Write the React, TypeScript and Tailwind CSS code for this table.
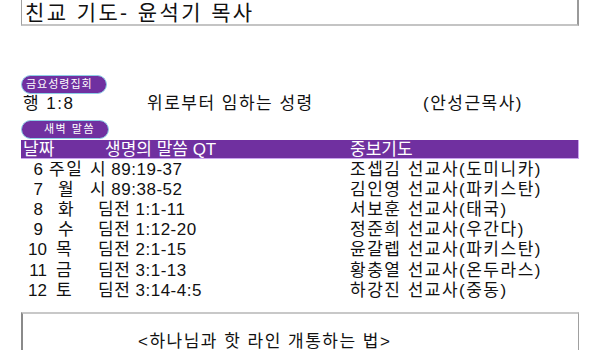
import React from "react";

const rows = [
  { num: "6", numCls: "pr-[4px]", day: "주일", dayCls: "pl-[2px]", verse: "시 89:19-37", vCls: "pl-0", pray: "조셉김 선교사(도미니카)" },
  { num: "7", numCls: "pr-[4px]", day: "월", dayCls: "pl-[11px]", verse: "시 89:38-52", vCls: "pl-0", pray: "김인영 선교사(파키스탄)" },
  { num: "8", numCls: "pr-[4px]", day: "화", dayCls: "pl-[11px]", verse: "딤전 1:1-11", vCls: "pl-[8px]", pray: "서보훈 선교사(태국)" },
  { num: "9", numCls: "pr-[4px]", day: "수", dayCls: "pl-[11px]", verse: "딤전 1:12-20", vCls: "pl-[8px]", pray: "정준희 선교사(우간다)" },
  { num: "10", numCls: "pr-0", day: "목", dayCls: "pl-[9px]", verse: "딤전 2:1-15", vCls: "pl-[8px]", pray: "윤갈렙 선교사(파키스탄)" },
  { num: "11", numCls: "pr-0", day: "금", dayCls: "pl-[9px]", verse: "딤전 3:1-13", vCls: "pl-[8px]", pray: "황충열 선교사(온두라스)" },
  { num: "12", numCls: "pr-0", day: "토", dayCls: "pl-[9px]", verse: "딤전 3:14-4:5", vCls: "pl-[8px]", pray: "하강진 선교사(중동)" },
];

export default function App() {
  return (
    <div
      className="w-[600px] h-[350px] overflow-hidden bg-white text-[#111]"
      style={{ fontFamily: '"Liberation Sans", "Noto Sans CJK KR", sans-serif' }}
    >
      <div className="ml-[21px] w-[558px] flex flex-col">
        {/* top box */}
        <div className="h-[26px] border-l border-r-2 border-b-2 border-l-[#a0a0a0] border-r-[#9a9a9a] border-b-[#c4c4c4] flex items-center pl-[3px]">
          <span className="text-[21px] leading-none tracking-[2.4px]">친교 기도- 윤석기 목사</span>
        </div>

        {/* pill 1 */}
        <div className="mt-[49px] w-[86px] h-[19px] rounded-full bg-[#7030a0] border border-[#8ecfe6] flex items-center pl-[4px]">
          <span className="text-[11px] leading-none text-white tracking-[1px]">금요성령집회</span>
        </div>

        {/* sermon line */}
        <div className="h-[26px] flex items-start pt-[1px] text-[17px] leading-none tracking-[1.5px]">
          <span className="w-[126px] pl-[2px]">행 1:8</span>
          <span className="w-[276px]">위로부터 임하는 성령</span>
          <span>(안성근목사)</span>
        </div>

        {/* pill 2 */}
        <div className="w-[88px] h-[19px] rounded-full bg-[#7030a0] border border-[#8ecfe6] flex items-center pl-[22px]">
          <span className="text-[11px] leading-none text-white tracking-[1.5px]">새벽 말씀</span>
        </div>

        {/* header bar */}
        <div className="mt-[1px] h-[19px] bg-[#7030a0] border-b border-r border-[#c9a3ee] flex items-center text-white text-[17px] leading-none">
          <span className="w-[84px] pl-[2px]">날짜</span>
          <span className="w-[245px]">생명의 말씀 QT</span>
          <span>중보기도</span>
        </div>

        {/* rows */}
        <div className="flex flex-col">
          {rows.map((r) => (
            <div key={r.num} className="h-[20.2px] flex items-center text-[17px] leading-none">
              <span className={`w-[26px] text-right ${r.numCls}`}>{r.num}</span>
              <span className={`w-[43px] tracking-[1.5px] ${r.dayCls}`}>{r.day}</span>
              <span className={`w-[260px] tracking-[0.5px] ${r.vCls}`}>{r.verse}</span>
              <span className="flex-1 tracking-[1.5px]">{r.pray}</span>
            </div>
          ))}
        </div>

        {/* bottom box */}
        <div className="mt-[12px] h-[60px] border-t-2 border-l-2 border-r border-t-[#c8c8c8] border-l-[#8a8a8a] border-r-[#a0a0a0] flex justify-start pl-[115px] pt-[19px]">
          <span className="text-[17px] leading-none tracking-[1.5px]">&lt;하나님과 핫 라인 개통하는 법&gt;</span>
        </div>
      </div>
    </div>
  );
}
